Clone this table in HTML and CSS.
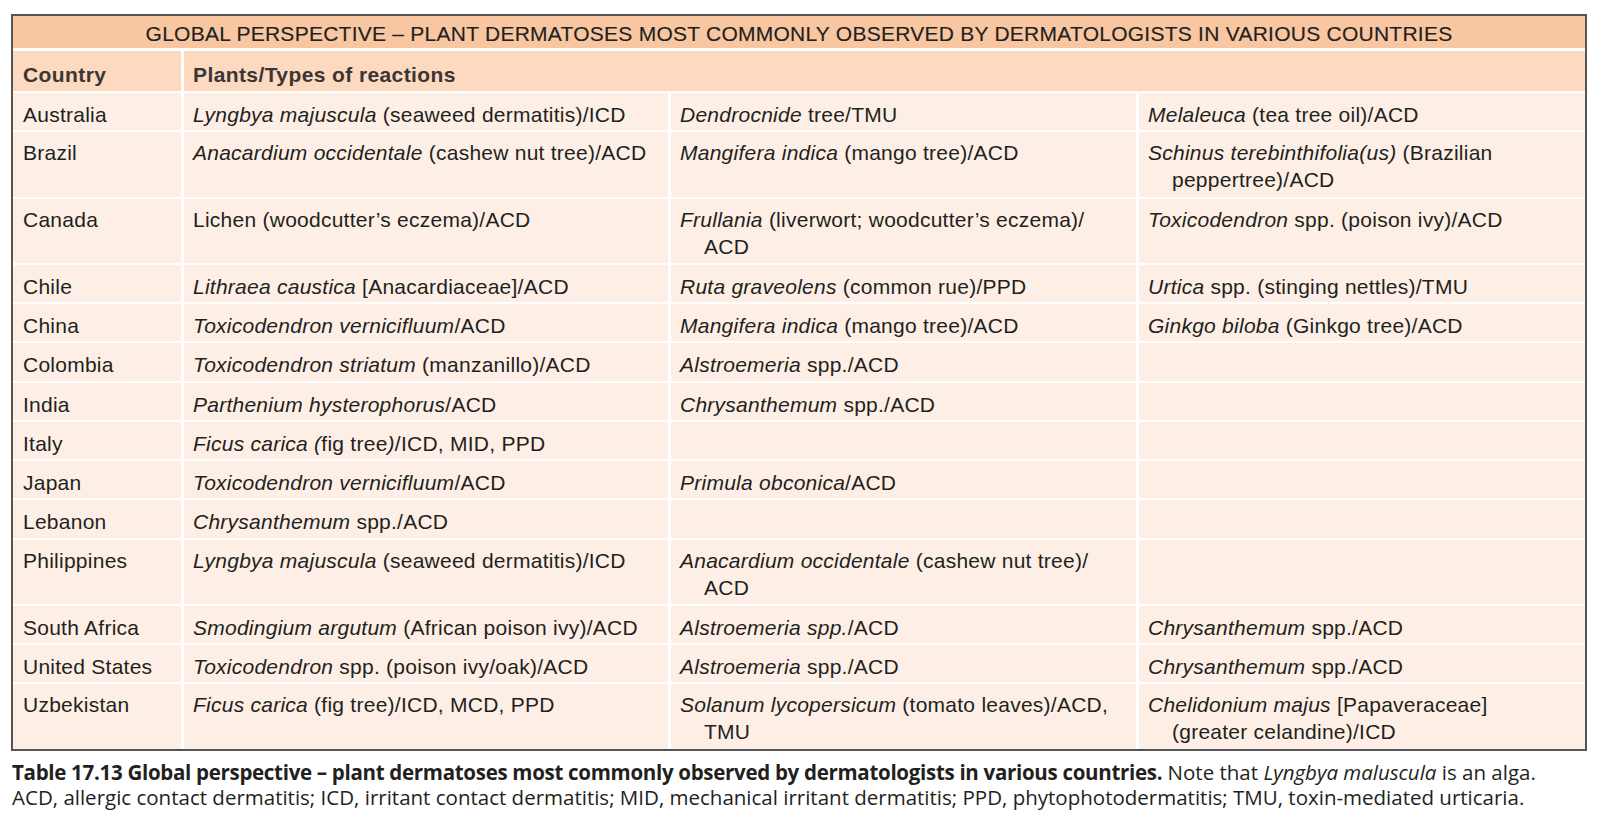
FILE: index.html
```html
<!DOCTYPE html>
<html lang="en">
<head>
<meta charset="utf-8">
<title>Table 17.13 Global perspective</title>
<link rel="stylesheet" href="styles.css">
</head>
<body>
<div class="frame">
<table class="tbl">
<colgroup>
<col class="c1"><col class="c2"><col class="c3"><col class="c4">
</colgroup>
<thead>
<tr class="title"><th colspan="4">GLOBAL PERSPECTIVE – PLANT DERMATOSES MOST COMMONLY OBSERVED BY DERMATOLOGISTS IN VARIOUS COUNTRIES</th></tr>
<tr class="head"><th>Country</th><th colspan="3">Plants/Types of reactions</th></tr>
</thead>
<tbody>
<tr><td>Australia</td><td><i>Lyngbya majuscula</i> (seaweed dermatitis)/ICD</td><td><i>Dendrocnide</i> tree/TMU</td><td><i>Melaleuca</i> (tea tree oil)/ACD</td></tr>
<tr class="two"><td>Brazil</td><td><i>Anacardium occidentale</i> (cashew nut tree)/ACD</td><td><i>Mangifera indica</i> (mango tree)/ACD</td><td><i>Schinus terebinthifolia(us)</i> (Brazilian<br>peppertree)/ACD</td></tr>
<tr class="two"><td>Canada</td><td>Lichen (woodcutter’s eczema)/ACD</td><td><i>Frullania</i> (liverwort; woodcutter’s eczema)/<br>ACD</td><td><i>Toxicodendron</i> spp. (poison ivy)/ACD</td></tr>
<tr><td>Chile</td><td><i>Lithraea caustica</i> [Anacardiaceae]/ACD</td><td><i>Ruta graveolens</i> (common rue)/PPD</td><td><i>Urtica</i> spp. (stinging nettles)/TMU</td></tr>
<tr><td>China</td><td><i>Toxicodendron vernicifluum</i>/ACD</td><td><i>Mangifera indica</i> (mango tree)/ACD</td><td><i>Ginkgo biloba</i> (Ginkgo tree)/ACD</td></tr>
<tr><td>Colombia</td><td><i>Toxicodendron striatum</i> (manzanillo)/ACD</td><td><i>Alstroemeria</i> spp./ACD</td><td></td></tr>
<tr><td>India</td><td><i>Parthenium hysterophorus</i>/ACD</td><td><i>Chrysanthemum</i> spp./ACD</td><td></td></tr>
<tr><td>Italy</td><td><i>Ficus carica (</i>fig tree<i>)</i>/ICD, MID, PPD</td><td></td><td></td></tr>
<tr><td>Japan</td><td><i>Toxicodendron vernicifluum</i>/ACD</td><td><i>Primula obconica</i>/ACD</td><td></td></tr>
<tr><td>Lebanon</td><td><i>Chrysanthemum</i> spp./ACD</td><td></td><td></td></tr>
<tr class="two"><td>Philippines</td><td><i>Lyngbya majuscula</i> (seaweed dermatitis)/ICD</td><td><i>Anacardium occidentale</i> (cashew nut tree)/<br>ACD</td><td></td></tr>
<tr><td>South Africa</td><td><i>Smodingium argutum</i> (African poison ivy)/ACD</td><td><i>Alstroemeria spp.</i>/ACD</td><td><i>Chrysanthemum</i> spp./ACD</td></tr>
<tr><td>United States</td><td><i>Toxicodendron</i> spp. (poison ivy/oak)/ACD</td><td><i>Alstroemeria</i> spp./ACD</td><td><i>Chrysanthemum</i> spp./ACD</td></tr>
<tr class="two last"><td>Uzbekistan</td><td><i>Ficus carica</i> (fig tree)/ICD, MCD, PPD</td><td><i>Solanum lycopersicum</i> (tomato leaves)/ACD,<br>TMU</td><td><i>Chelidonium majus</i> [Papaveraceae]<br>(greater celandine)/ICD</td></tr>
</tbody>
</table>
</div>
<p class="caption"><b>Table 17.13 Global perspective – plant dermatoses most commonly observed by dermatologists in various countries.</b> Note that <i>Lyngbya maluscula</i> is an alga.<br>ACD, allergic contact dermatitis; ICD, irritant contact dermatitis; MID, mechanical irritant dermatitis; PPD, phytophotodermatitis; TMU, toxin-mediated urticaria.</p>
</body>
</html>
```

FILE: styles.css
```css
html, body {
  margin: 0;
  padding: 0;
  background: #ffffff;
}
body {
  padding: 14px 0 0 11px;
  font-family: "Liberation Sans", Arial, sans-serif;
  color: #231f20;
}
.frame {
  width: 1572px;
  border: 2px solid #555555;
  background: #fdefe5;
}
.tbl {
  width: 1572px;
  table-layout: fixed;
  border-collapse: separate;
  border-spacing: 0;
  font-size: 21px;
  line-height: 27px;
  letter-spacing: 0.25px;
}
.c1 { width: 168px; }
.c2 { width: 487px; }
.c3 { width: 468px; }
.c4 { width: 449px; }

.tbl th, .tbl td {
  text-align: left;
  vertical-align: top;
  font-weight: normal;
  white-space: nowrap;
  padding: 0;
}
.title th {
  background: #f8c7a2;
  text-align: center;
  padding: 4px 0 1px;
  border-bottom: 3px solid #ffffff;
  -webkit-text-stroke: 0.15px #231f20;
}
.head th {
  background: #fcd9bf;
  padding: 10px 0 3px 10px;
  border-bottom: 2px solid #ffffff;
  font-weight: bold;
  letter-spacing: 0.4px;
  color: #3a3536;
}
.head th + th {
  border-left: 3px solid #ffffff;
  padding-left: 9px;
}
.tbl td {
  background: #fdefe5;
  padding: 8px 0 2.25px 10px;
  border-bottom: 2px solid #ffffff;
}
.tbl td + td {
  border-left: 3px solid #ffffff;
  padding-left: 33px;
  text-indent: -24px;
}
.tbl tr.two td {
  padding-top: 7px;
  padding-bottom: 3.25px;
}
.tbl tr.last td {
  border-bottom: 0;
}
.caption {
  margin: 9px 0 0 1px;
  font-family: "Open Sans", "Liberation Sans", sans-serif;
  font-size: 20.5px;
  line-height: 25.5px;
  color: #231f20;
}
.caption b {
  font-weight: 700;
  letter-spacing: -0.3px;
}
```
